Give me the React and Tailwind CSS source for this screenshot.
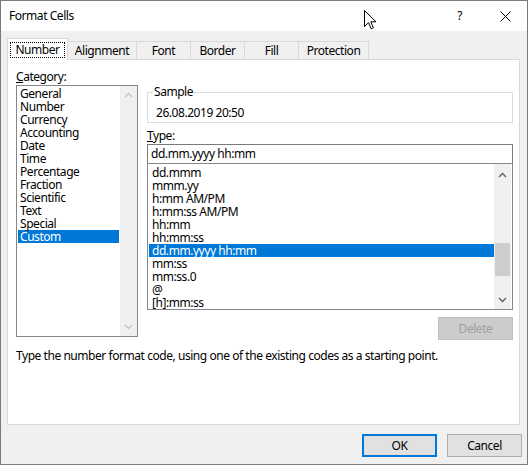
import React from "react";

const categories = [
  "General",
  "Number",
  "Currency",
  "Accounting",
  "Date",
  "Time",
  "Percentage",
  "Fraction",
  "Scientific",
  "Text",
  "Special",
  "Custom",
];

const formats = [
  "dd.mmm",
  "mmm.yy",
  "h:mm AM/PM",
  "h:mm:ss AM/PM",
  "hh:mm",
  "hh:mm:ss",
  "dd.mm.yyyy hh:mm",
  "mm:ss",
  "mm:ss.0",
  "@",
  "[h]:mm:ss",
];

const tabs = [
  { label: "Alignment", w: "w-[70px]" },
  { label: "Font", w: "w-[55px]" },
  { label: "Border", w: "w-[55px]" },
  { label: "Fill", w: "w-[55px]" },
  { label: "Protection", w: "w-[71px]" },
];

const Chevron = ({ up, color }) => (
  <svg width="9" height="6" viewBox="0 0 9 6">
    <path
      d={up ? "M1 5 L4.5 1.5 L8 5" : "M1 1 L4.5 4.5 L8 1"}
      fill="none"
      stroke={color}
      strokeWidth="1.4"
    />
  </svg>
);

const App = () => {
  return (
    <div className="relative w-[529px] h-[465px] bg-white font-['Noto_Sans',sans-serif] text-[12px] tracking-[-0.45px] text-black">
      {/* window */}
      <div className="flex flex-col w-[528px] h-[465px] border border-[#7a7a7a]">
        {/* title bar */}
        <div className="flex items-center h-[30px] bg-white shrink-0">
          <span className="pl-[8px]">Format Cells</span>
          <span className="ml-auto mr-[38px]">?</span>
          <svg width="11" height="11" viewBox="0 0 11 11" className="mr-[16px]">
            <path d="M0.5 0.5 L10.5 10.5 M10.5 0.5 L0.5 10.5" stroke="#000" strokeWidth="1" />
          </svg>
        </div>

        {/* body */}
        <div className="flex-1 flex flex-col bg-[#f0f0f0] pt-[7px] pl-[6px] pr-[7px]">
          {/* tabs */}
          <div className="flex items-end h-[22px]">
            <div className="relative z-10 flex items-center justify-center w-[61px] h-[22px] bg-white border border-b-0 border-[#d9d9d9]">
              <span className="border border-dotted border-black px-[4px] leading-[14px]">Number</span>
            </div>
            {tabs.map((t) => (
              <div
                key={t.label}
                className={`${t.w} -ml-px flex items-center justify-center h-[19px] bg-[#f0f0f0] border border-b-0 border-[#d9d9d9]`}
              >
                {t.label}
              </div>
            ))}
          </div>

          {/* panel */}
          <div className="-mt-px h-[366px] bg-white border border-[#d9d9d9] pl-[8px] pr-[6px] pt-[9px]">
            <div className="flex">
              {/* left column */}
              <div className="w-[122px] flex flex-col">
                <div className="leading-[16px]">
                  <u>C</u>ategory:
                </div>
                <div className="flex h-[252px] border border-[#828790]">
                  <div className="flex-1 pt-[1px] pl-[1px]">
                    {categories.map((c) => (
                      <div
                        key={c}
                        className={`h-[13px] leading-[13px] pl-[2px] ${
                          c === "Custom" ? "bg-[#0078d7] text-white" : ""
                        }`}
                      >
                        {c}
                      </div>
                    ))}
                  </div>
                  <div className="w-[17px] ml-[1px] bg-[#f0f0f0] flex flex-col items-center justify-between py-[6px]">
                    <Chevron up color="#c4c4c4" />
                    <Chevron color="#c4c4c4" />
                  </div>
                </div>
              </div>

              {/* right column */}
              <div className="ml-[9px] w-[366px] flex flex-col">
                {/* sample group */}
                <div className="relative mt-[23px] h-[31px] border border-[#dcdcdc]">
                  <span className="absolute -top-[9px] left-[5px] bg-white px-[1px] leading-[16px]">
                    Sample
                  </span>
                  <div className="pl-[8px] pt-[12px] leading-[16px]">26.08.2019 20:50</div>
                </div>

                <div className="mt-[5px] leading-[16px]">
                  <u>T</u>ype:
                </div>
                <div className="h-[20px] border border-[#7a7a7a] pl-[3px] leading-[18px]">
                  dd.mm.yyyy hh:mm
                </div>
                <div className="-mt-px flex h-[147px] border border-[#828790]">
                  <div className="flex-1 pt-[2px] pl-[1px]">
                    {formats.map((f) => (
                      <div
                        key={f}
                        className={`h-[13px] leading-[13px] pl-[3px] ${
                          f === "dd.mm.yyyy hh:mm" ? "bg-[#0078d7] text-white" : ""
                        }`}
                      >
                        {f}
                      </div>
                    ))}
                  </div>
                  <div className="relative w-[17px] mr-[1px] bg-[#f0f0f0] flex flex-col items-center justify-between pt-[8px] pb-[6px]">
                    <Chevron up color="#606060" />
                    <div className="absolute left-[1px] right-[1px] top-[79px] h-[33px] bg-[#cdcdcd]" />
                    <Chevron color="#606060" />
                  </div>
                </div>
                <div className="mt-[7px] self-end flex items-center justify-center w-[75px] h-[23px] bg-[#cccccc] border border-[#bfbfbf] text-[#a0a0a0]">
                  Delete
                </div>
              </div>
            </div>

            <div className="mt-[8px] leading-[16px]">
              Type the number format code, using one of the existing codes as a starting point.
            </div>
          </div>

          {/* buttons */}
          <div className="flex justify-end gap-[10px] mt-[9px] mr-[-2px]">
            <div className="flex items-center justify-center w-[75px] h-[23px] bg-[#e1e1e1] border-2 border-[#0078d7]">
              OK
            </div>
            <div className="flex items-center justify-center w-[75px] h-[23px] bg-[#e1e1e1] border border-[#adadad]">
              Cancel
            </div>
          </div>
        </div>
      </div>

      {/* mouse cursor */}
      <svg
        className="absolute top-[10px] left-[364px]"
        width="13"
        height="20"
        viewBox="0 0 13 20"
      >
        <path
          d="M0.5 0.5 L0.5 16.5 L4.5 12.7 L7.2 18.8 L9.4 17.8 L6.8 11.8 L12 11.8 Z"
          fill="#fff"
          stroke="#000"
          strokeWidth="1"
          strokeLinejoin="miter"
        />
      </svg>
    </div>
  );
};

export default App;
